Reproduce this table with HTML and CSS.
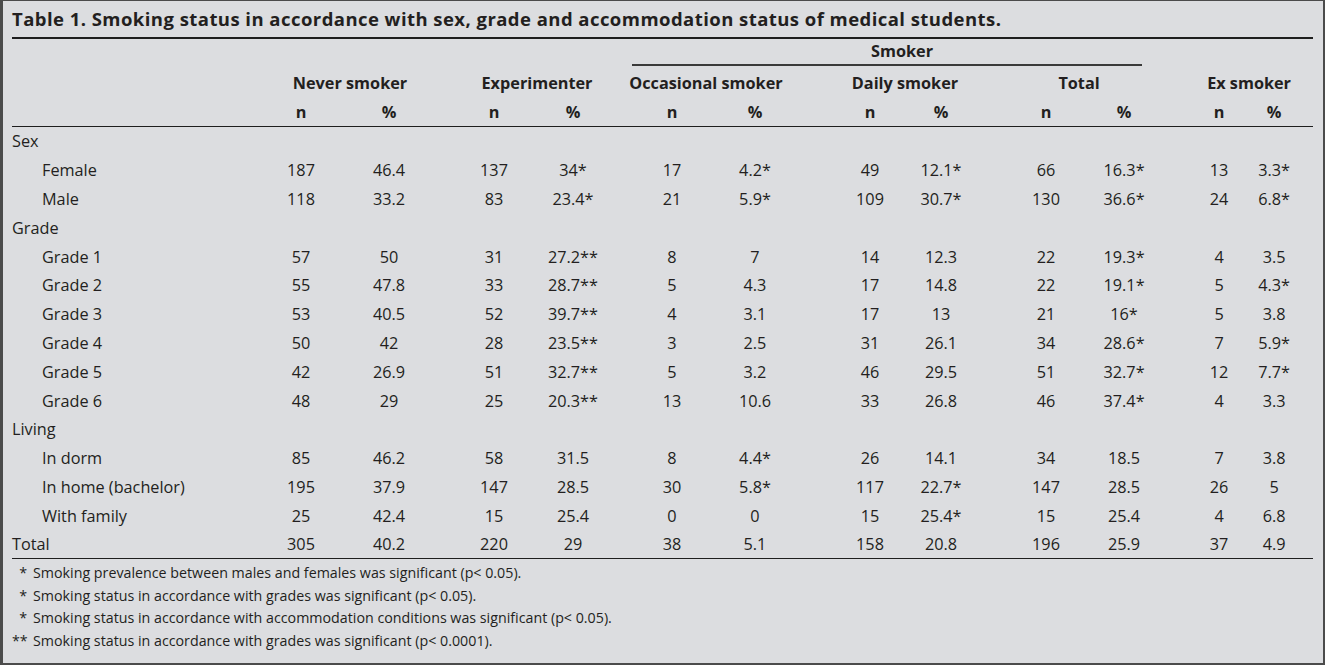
FILE: index.html
```html
<!DOCTYPE html>
<html lang="en">
<head>
<meta charset="utf-8">
<title>Table 1</title>
<link rel="stylesheet" href="styles.css">
</head>
<body>
<div class="frame">
  <h1 class="title">Table 1. Smoking status in accordance with sex, grade and accommodation status of medical students.</h1>
  <table class="data">
    <colgroup>
      <col><col><col><col><col><col><col><col><col><col><col><col><col>
    </colgroup>
    <thead>
      <tr class="h-top">
        <th colspan="5"></th>
        <th colspan="6"><div class="smoker-rule">Smoker</div></th>
        <th colspan="2"></th>
      </tr>
      <tr class="h-group">
        <th></th>
        <th colspan="2">Never smoker</th>
        <th colspan="2">Experimenter</th>
        <th colspan="2">Occasional smoker</th>
        <th colspan="2">Daily smoker</th>
        <th colspan="2">Total</th>
        <th colspan="2">Ex smoker</th>
      </tr>
      <tr class="h-sub">
        <th></th>
        <th>n</th><th>%</th>
        <th>n</th><th>%</th>
        <th>n</th><th>%</th>
        <th>n</th><th>%</th>
        <th>n</th><th>%</th>
        <th>n</th><th>%</th>
      </tr>
    </thead>
    <tbody>
      <tr><td class="section" colspan="13">Sex</td></tr>
      <tr><td class="sub">Female</td><td>187</td><td>46.4</td><td>137</td><td>34*</td><td>17</td><td>4.2*</td><td>49</td><td>12.1*</td><td>66</td><td>16.3*</td><td>13</td><td>3.3*</td></tr>
      <tr><td class="sub">Male</td><td>118</td><td>33.2</td><td>83</td><td>23.4*</td><td>21</td><td>5.9*</td><td>109</td><td>30.7*</td><td>130</td><td>36.6*</td><td>24</td><td>6.8*</td></tr>
      <tr><td class="section" colspan="13">Grade</td></tr>
      <tr><td class="sub">Grade 1</td><td>57</td><td>50</td><td>31</td><td>27.2**</td><td>8</td><td>7</td><td>14</td><td>12.3</td><td>22</td><td>19.3*</td><td>4</td><td>3.5</td></tr>
      <tr><td class="sub">Grade 2</td><td>55</td><td>47.8</td><td>33</td><td>28.7**</td><td>5</td><td>4.3</td><td>17</td><td>14.8</td><td>22</td><td>19.1*</td><td>5</td><td>4.3*</td></tr>
      <tr><td class="sub">Grade 3</td><td>53</td><td>40.5</td><td>52</td><td>39.7**</td><td>4</td><td>3.1</td><td>17</td><td>13</td><td>21</td><td>16*</td><td>5</td><td>3.8</td></tr>
      <tr><td class="sub">Grade 4</td><td>50</td><td>42</td><td>28</td><td>23.5**</td><td>3</td><td>2.5</td><td>31</td><td>26.1</td><td>34</td><td>28.6*</td><td>7</td><td>5.9*</td></tr>
      <tr><td class="sub">Grade 5</td><td>42</td><td>26.9</td><td>51</td><td>32.7**</td><td>5</td><td>3.2</td><td>46</td><td>29.5</td><td>51</td><td>32.7*</td><td>12</td><td>7.7*</td></tr>
      <tr><td class="sub">Grade 6</td><td>48</td><td>29</td><td>25</td><td>20.3**</td><td>13</td><td>10.6</td><td>33</td><td>26.8</td><td>46</td><td>37.4*</td><td>4</td><td>3.3</td></tr>
      <tr><td class="section" colspan="13">Living</td></tr>
      <tr><td class="sub">In dorm</td><td>85</td><td>46.2</td><td>58</td><td>31.5</td><td>8</td><td>4.4*</td><td>26</td><td>14.1</td><td>34</td><td>18.5</td><td>7</td><td>3.8</td></tr>
      <tr><td class="sub">In home (bachelor)</td><td>195</td><td>37.9</td><td>147</td><td>28.5</td><td>30</td><td>5.8*</td><td>117</td><td>22.7*</td><td>147</td><td>28.5</td><td>26</td><td>5</td></tr>
      <tr><td class="sub">With family</td><td>25</td><td>42.4</td><td>15</td><td>25.4</td><td>0</td><td>0</td><td>15</td><td>25.4*</td><td>15</td><td>25.4</td><td>4</td><td>6.8</td></tr>
      <tr class="total"><td>Total</td><td>305</td><td>40.2</td><td>220</td><td>29</td><td>38</td><td>5.1</td><td>158</td><td>20.8</td><td>196</td><td>25.9</td><td>37</td><td>4.9</td></tr>
    </tbody>
  </table>
  <div class="notes">
    <div class="note"><span class="mark">*</span><span>Smoking prevalence between males and females was significant (p&lt; 0.05).</span></div>
    <div class="note"><span class="mark">*</span><span>Smoking status in accordance with grades was significant (p&lt; 0.05).</span></div>
    <div class="note"><span class="mark">*</span><span>Smoking status in accordance with accommodation conditions was significant (p&lt; 0.05).</span></div>
    <div class="note"><span class="mark">**</span><span>Smoking status in accordance with grades was significant (p&lt; 0.0001).</span></div>
  </div>
</div>
</body>
</html>
```

FILE: styles.css
```css
* { box-sizing: border-box; }

html, body {
  margin: 0;
  padding: 0;
  background: #dcdde0;
}

body {
  font-family: "Open Sans", "Liberation Sans", sans-serif;
  color: #231f20;
}

.frame {
  width: 1325px;
  height: 665px;
  border-style: solid;
  border-color: #4b4b4b;
  border-width: 1px 2px 2px 3px;
  padding: 0 10px 0 9px;
  background: #dcdde0;
  overflow: hidden;
}

.title {
  margin: 0;
  height: 38px;
  font-size: 18.5px;
  letter-spacing: 0.45px;
  font-weight: 700;
  line-height: 36px;
  border-bottom: 2px solid #1e1e1e;
  white-space: nowrap;
}

/* ---------- table ---------- */
.data {
  width: 1301px;
  table-layout: fixed;
  border-collapse: separate;
  border-spacing: 0;
  font-size: 16.25px;
}

.data col:nth-child(1)  { width: 245px; }
.data col:nth-child(2)  { width: 82px; }
.data col:nth-child(3)  { width: 110px; }
.data col:nth-child(4)  { width: 81px; }
.data col:nth-child(5)  { width: 91px; }
.data col:nth-child(6)  { width: 98px; }
.data col:nth-child(7)  { width: 91px; }
.data col:nth-child(8)  { width: 95px; }
.data col:nth-child(9)  { width: 83px; }
.data col:nth-child(10) { width: 103px; }
.data col:nth-child(11) { width: 85px; }
.data col:nth-child(12) { width: 69px; }
.data col:nth-child(13) { width: 68px; }

.data th,
.data td {
  padding: 0;
  text-align: center;
  vertical-align: middle;
  font-weight: 400;
  white-space: nowrap;
}

/* header rows */
.h-top th { height: 26px; }

.smoker-rule {
  margin: 0 34px 0 11px;
  padding-left: 30px;
  line-height: 25px;
  font-weight: 700;
  border-bottom: 2px solid #3a3a3a;
}

.h-group th {
  height: 33px;
  font-weight: 700;
}

.h-group th:nth-child(2) { padding-right: 6px; }
.h-group th:nth-child(3) { padding-left: 4px; }
.h-group th:nth-child(4) { padding-right: 19px; }
.h-group th:nth-child(5) { padding-left: 12px; }
.h-group th:nth-child(6) { padding-right: 6px; }
.h-group th:nth-child(7) { padding-left: 9px; }

.h-sub th {
  height: 28px;
  padding-bottom: 2px;
  font-weight: 700;
  border-bottom: 1px solid #1e1e1e;
}

/* column offsets (shared by n / % headers and body cells) */
.h-sub th:nth-child(2),  .data td:nth-child(2)  { padding-left: 6px; }
.h-sub th:nth-child(3),  .data td:nth-child(3)  { padding-right: 10px; }
.h-sub th:nth-child(4),  .data td:nth-child(4)  { padding-left: 9px; }
.h-sub th:nth-child(5),  .data td:nth-child(5)  { padding-right: 5px; }
.h-sub th:nth-child(6),  .data td:nth-child(6)  { padding-left: 4px; }
.h-sub th:nth-child(7),  .data td:nth-child(7)  { padding-right: 19px; }
.h-sub th:nth-child(8),  .data td:nth-child(8)  { padding-left: 25px; }
.h-sub th:nth-child(9),  .data td:nth-child(9)  { padding-right: 11px; }
.h-sub th:nth-child(10), .data td:nth-child(10) { padding-left: 13px; }
.h-sub th:nth-child(11), .data td:nth-child(11) { padding-right: 19px; }
.h-sub th:nth-child(12), .data td:nth-child(12) { padding-left: 17px; }
.h-sub th:nth-child(13), .data td:nth-child(13) { padding-right: 10px; }

/* body rows */
.data tbody td { height: 28.8px; }

.data td.section,
.data td:first-child {
  text-align: left;
}

.data td.sub { padding-left: 30px; }

.total td { border-bottom: 1px solid #1e1e1e; }

/* ---------- footnotes ---------- */
.notes {
  padding-top: 3px;
  font-size: 14.25px;
  line-height: 22.7px;
}

.note {
  display: grid;
  grid-template-columns: 15px 1fr;
  column-gap: 6px;
}

.mark { text-align: right; }
```
